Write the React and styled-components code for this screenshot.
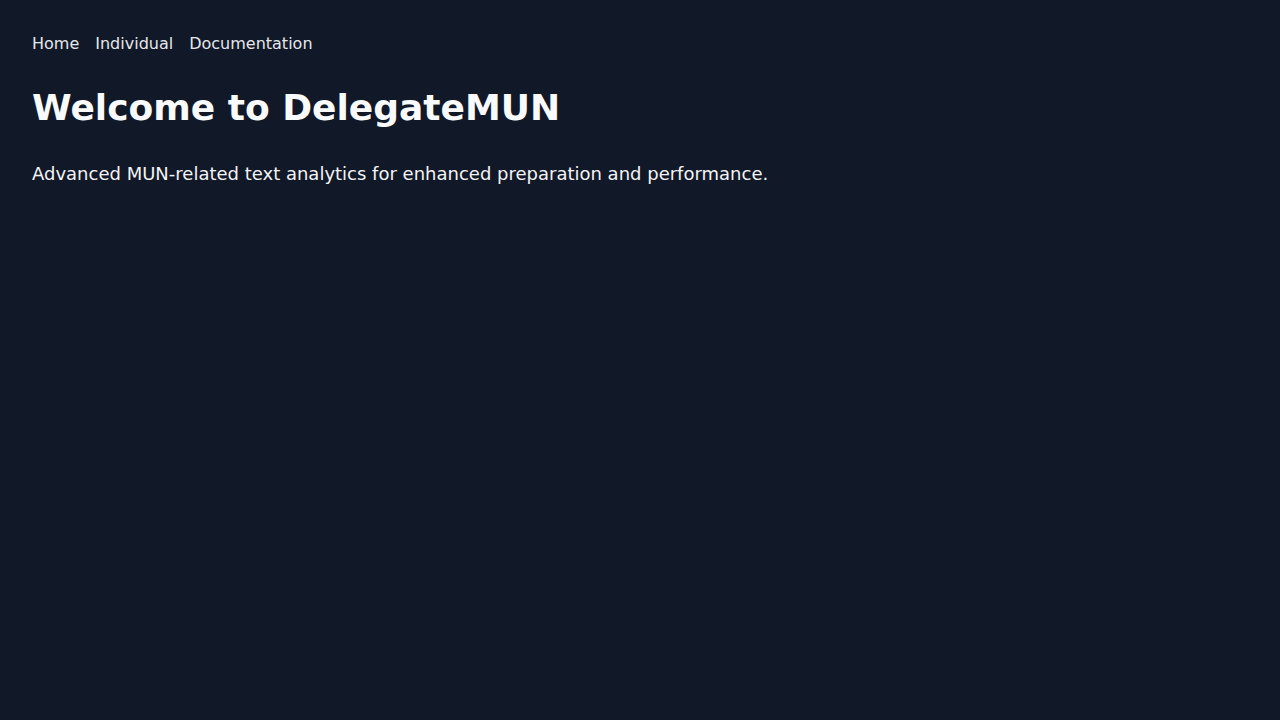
import React from "react";
import styled, { createGlobalStyle } from "styled-components";

const GlobalStyle = createGlobalStyle`
  html, body {
    margin: 0;
    padding: 0;
    background: #111827;
  }
  body {
    font-family: "DejaVu Sans", sans-serif;
    color: #f9fafb;
  }
`;

const Page = styled.div`
  min-height: 720px;
  padding: 32px;
  box-sizing: border-box;
  background: #111827;
`;

const Nav = styled.nav`
  display: flex;
  gap: 16px;
  height: 24px;
  align-items: center;
`;

const NavLink = styled.a`
  font-size: 16px;
  line-height: 24px;
  color: #e5e7eb;
  text-decoration: none;
`;

const Title = styled.h1`
  margin: 32px 0 0;
  font-size: 36px;
  line-height: 40px;
  font-weight: 700;
  color: #f9fafb;
`;

const Lead = styled.p`
  margin: 32px 0 0;
  font-size: 18px;
  line-height: 28px;
  color: #f3f4f6;
`;

function App() {
  const links = ["Home", "Individual", "Documentation"];

  return (
    <>
      <GlobalStyle />
      <Page>
        <Nav>
          {links.map(l => (
            <NavLink key={l} href="#">{l}</NavLink>
          ))}
        </Nav>
        <Title>Welcome to DelegateMUN</Title>
        <Lead>
          Advanced MUN-related text analytics for enhanced preparation and performance.
        </Lead>
      </Page>
    </>
  );
}

export default App;
